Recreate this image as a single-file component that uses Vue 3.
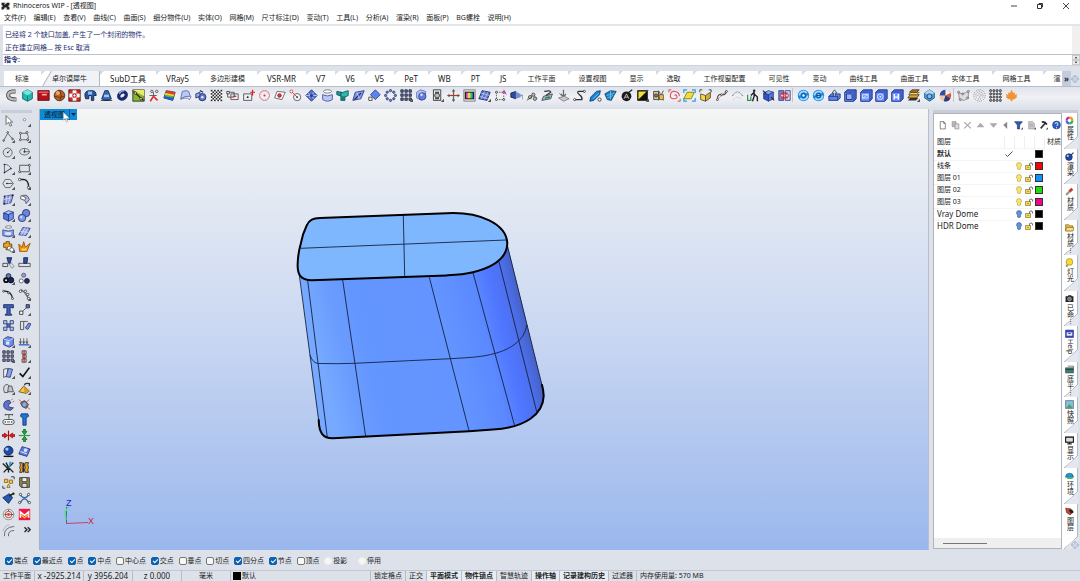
<template>
  <div class="rhino">
    <!-- Title bar -->
    <header class="title-bar">
      <svg class="logo" viewBox="0 0 16 16">
        <path d="M1 2h14v12H1z" fill="#d4d4d4" />
        <path d="M1 2h6l-2 4 4-2 2-2h4v4l-3 2 3 2v4h-5l1-3-4-1-3 4H1v-4l3-2-3-2z" fill="#222" />
      </svg>
      <span class="title">Rhinoceros WIP - [透视图]</span>
      <div class="window-controls">
        <button aria-label="Minimize"><svg viewBox="0 0 8 8"><path d="M1 4h6" stroke="#444" /></svg></button>
        <button aria-label="Restore"><svg viewBox="0 0 8 8"><path d="M1.500 2.500h4v4h-4zM3 2.500v-1h3.500v3.500h-1" stroke="#333" fill="none" /></svg></button>
        <button aria-label="Close"><svg viewBox="0 0 8 8"><path d="M1 1l6 6M7 1l-6 6" stroke="#444" /></svg></button>
      </div>
    </header>

    <nav class="menu-bar">
      <div class="menu-list">
        <a v-for="item in menus" :key="item" href="#">{{ item }}</a>
      </div>
    </nav>

    <!-- Command history and prompt -->
    <section class="command">
      <div class="history">
        <p>已经将 2 个缺口加盖, 产生了一个封闭的物件。</p>
        <p>正在建立网格... 按 Esc 取消</p>
      </div>
      <div class="prompt">
        <label for="command-input">指令:</label>
        <input id="command-input" v-model="command" type="text" />
        <div class="spinner">
          <button aria-label="Up"><svg viewBox="0 0 6 4"><path d="M1 3l2-2 2 2z" fill="#222" /></svg></button>
          <button aria-label="Down"><svg viewBox="0 0 6 4"><path d="M1 1l2 2 2-2z" fill="#222" /></svg></button>
        </div>
      </div>
    </section>

    <!-- Toolbar tabs -->
    <nav class="tabs">
      <div class="tab-list">
        <button
          v-for="tab in tabs"
          :key="tab"
          :class="{ active: tab === activeTab, latin: isLatin(tab) }"
          @click="activeTab = tab"
        >{{ tab }}</button>
      </div>
      <button class="more-tabs" aria-label="More tabs">»</button>
      <button class="tab-options" aria-label="Options"><svg viewBox="0 0 16 16" v-html="gear"></svg></button>
    </nav>

    <div class="toolbar">
      <div v-for="(group, g) in toolGroups" :key="g" class="tool-group" :style="{ flexGrow: group.length }">
        <button v-for="(art, i) in group" :key="i" class="tool" :aria-label="'Tool ' + (i + 1)">
          <svg viewBox="0 0 16 16" v-html="art"></svg>
        </button>
      </div>
    </div>

    <main class="workspace">
      <aside class="side-tools">
        <div class="grip"></div>
        <div class="side-grid">
          <button v-for="(art, i) in sideTools" :key="i" class="tool" :aria-label="'Side tool ' + (i + 1)">
            <svg viewBox="0 0 16 16" v-html="art"></svg>
          </button>
        </div>
      </aside>

      <section class="viewport">
        <svg class="scene" viewBox="40 109 888 441" preserveAspectRatio="xMinYMin meet">
          <defs>
            <linearGradient id="wall" gradientUnits="userSpaceOnUse" x1="300" y1="277" x2="502" y2="228">
              <stop offset="0" stop-color="#76a9ff" />
              <stop offset="0.12" stop-color="#6a9cff" />
              <stop offset="0.22" stop-color="#6496ff" />
              <stop offset="0.62" stop-color="#6494ff" />
              <stop offset="0.8" stop-color="#5b89ff" />
              <stop offset="0.89" stop-color="#4f76ff" />
              <stop offset="0.95" stop-color="#4d70ee" />
              <stop offset="1" stop-color="#4763cb" />
            </linearGradient>
          </defs>
          <path d="M299 270L319 425Q321 438 332 438.300L469 431L493 429.300Q543 425 543.500 397Q543.500 391 542 385L507.500 245L473 262L320 270z" fill="url(#wall)" />
          <path d="M320 218L446.700 213.200C480 211.500 506.500 224 507.300 243.300C507 259 492 267.500 473 272.300C463 274.700 455 275 446.700 275.400L312 280.300C301 280.500 297 275 297.700 263C298 254 299 250 300.700 244C302 236 304 231 306.700 225.500C309.500 219.500 313 218.400 320 218z" fill="#7fb7ff" />
          <g fill="none" stroke="#14233f" stroke-width="0.900">
            <path d="M300.700 248.300L506 240M403.300 215L404.700 276.700" />
            <path d="M299.300 275L319.300 425M307.700 280.700L327.300 437.300M342.700 280L365.700 436.700M429.300 277.300L469 430.700M473 272.700L514.700 426M499 261.700L536.700 411.700M507.500 246L542.700 388" />
            <path d="M310 355C312 361 315 363.300 319 363.500Q337 364 354.700 363.300L450.700 358.700C470 357.500 483 357 495.300 353.300C510 349.500 525 340 526.700 325" />
          </g>
          <g fill="none" stroke="#000" stroke-width="2" stroke-linecap="round">
            <path d="M320 218L446.700 213.200C480 211.500 506.500 224 507.300 243.300C507 259 492 267.500 473 272.300C463 274.700 455 275 446.700 275.400L312 280.300C301 280.500 297 275 297.700 263C298 254 299 250 300.700 244C302 236 304 231 306.700 225.500C309.500 219.500 313 218.400 320 218z" />
            <path d="M318.700 420C319 433 323 438.500 333 438.300L469 431.200L493 429.500C526 427.500 543 414 543.700 396Q543.500 390 542 385" />
          </g>
          <!-- World axes -->
          <path d="M66.500 524V507" stroke="#4763a8" fill="none" />
          <path d="M66 520L65 512L69 506" stroke="#5bdc84" stroke-width="1.500" fill="none" />
          <path d="M66 523.500L88 522.500" stroke="#c4435f" fill="none" />
          <text x="66" y="506" fill="#2222c8" class="axis">Z</text>
          <text x="88" y="524" fill="#d0203a" class="axis">X</text>
        </svg>
        <div class="view-label">
          <button class="view-name">透视图</button>
          <button class="view-menu" aria-label="View menu"><svg viewBox="0 0 6 4"><path d="M0 0h6l-3 4z" fill="#0a2038" /></svg></button>
        </div>
        <svg class="cursor" viewBox="0 0 8 12"><path d="M1 0v9l2-2 1.500 4 1.500-1-1.500-3H8z" fill="#fff" stroke="#777" stroke-width="0.500" /></svg>
      </section>

      <aside class="dock">
        <div class="grip"></div>
        <div class="dock-body">
          <section class="layers">
            <div class="layer-tools">
              <button v-for="(art, i) in layerTools" :key="i" :aria-label="'Layer action ' + (i + 1)">
                <svg viewBox="0 0 16 16" v-html="art"></svg>
              </button>
            </div>
            <table>
              <thead>
                <tr>
                  <th class="name">图层</th><th></th><th></th><th></th><th></th><th>材质</th>
                </tr>
              </thead>
              <tbody>
                <tr v-for="layer in layers" :key="layer.name" :class="{ current: layer.current }">
                  <td class="name" :class="{ latin: isLatin(layer.name) }">{{ layer.name }}</td>
                  <td><svg v-if="layer.current" viewBox="0 0 16 16" v-html="tick"></svg></td>
                  <td><svg v-if="!layer.current" viewBox="0 0 16 16" v-html="layer.on ? bulbOn : bulbOff"></svg></td>
                  <td><svg v-if="!layer.current" viewBox="0 0 16 16" v-html="lock"></svg></td>
                  <td><span class="swatch" :style="{ background: layer.color }"></span></td>
                  <td></td>
                </tr>
              </tbody>
            </table>
            <div class="scrollbar"><span></span></div>
          </section>
          <nav class="panel-tabs">
            <button v-for="panel in panels" :key="panel.id" :class="{ active: panel.id === 'layers' }">
              <svg viewBox="0 0 16 16" v-html="panel.art"></svg>
              <span>{{ panel.label }}</span>
            </button>
          </nav>
          <svg class="dock-gear" viewBox="0 0 16 16" v-html="gear"></svg>
        </div>
      </aside>
    </main>

    <!-- Object snaps -->
    <div class="osnap">
      <div class="snap-list">
        <label v-for="snap in snaps" :key="snap.label" :class="{ round: snap.round }">
          <input v-model="snap.on" type="checkbox" />{{ snap.label }}
        </label>
      </div>
    </div>

    <footer class="status">
      <span class="cell">工作平面</span>
      <span class="cell coord">x -2925.214</span>
      <span class="cell coord">y 3956.204</span>
      <span class="cell coord">z 0.000</span>
      <span class="cell unit">毫米</span>
      <span class="cell layer"><i></i>默认</span>
      <button v-for="mode in modes" :key="mode.label" class="cell" :class="{ on: mode.on }" @click="mode.on = !mode.on">{{ mode.label }}</button>
      <span class="cell memory">内存使用量: 570 MB</span>
    </footer>
  </div>
</template>

<script setup>
import { ref } from 'vue'

const command = ref('')
const activeTab = ref('卓尔谟犀牛')

const menus = [
  '文件(F)', '编辑(E)', '查看(V)', '曲线(C)', '曲面(S)', '细分物件(U)', '实体(O)', '网格(M)',
  '尺寸标注(D)', '变动(T)', '工具(L)', '分析(A)', '渲染(R)', '面板(P)', 'BG螺栓', '说明(H)'
]

const tabs = [
  '标准', '卓尔谟犀牛', 'SubD工具', 'VRay5', '多边形建模', 'VSR-MR', 'V7', 'V6', 'V5', 'PeT', 'WB', 'PT', 'JS',
  '工作平面', '设置视图', '显示', '选取', '工作视窗配置', '可见性', '变动', '曲线工具', '曲面工具', '实体工具',
  '网格工具', '渲'
]

function isLatin(text) {
  return /^\w/.test(text)
}

// Small drawing helpers, all on a 16 x 16 grid
const fill = (d, color, line = 'none') => `<path d="${d}" fill="${color}" stroke="${line}"/>`
const line = (d, color = '#333', width = 1) => `<path d="${d}" fill="none" stroke="${color}" stroke-width="${width}"/>`
const dot = (x, y, r, color, edge = 'none') => `<circle cx="${x}" cy="${y}" r="${r}" fill="${color}" stroke="${edge}"/>`
const dots = (points, r, color, edge) => points.map(([x, y]) => dot(x, y, r, color, edge)).join('')
const more = fill('M16 12v4h-4z', '#555')

const grid = (size, color) =>
  [2, 7, 12].map((y) => [1, 6, 11].map((x) => fill(`M${x} ${y - 1}h${size}v${size}h-${size}z`, color, '#223')).join('')).join('')

const checker = (n, color) => {
  const s = 14 / n
  let out = fill('M1 1h14v14H1z', '#fff')
  for (let y = 0; y < n; y++) {
    for (let x = 0; x < n; x++) {
      if ((x + y) % 2 === 0) out += `<rect x="${1 + x * s}" y="${1 + y * s}" width="${s}" height="${s}" fill="${color}"/>`
    }
  }
  return out
}

const cube = (top, left, right) =>
  fill('M2 5l6-3 6 2-6 3z', top, '#223a80') + fill('M2 5l6 2v8l-6-3z', left, '#223a80') + fill('M8 7l6-3v8l-6 3z', right, '#223a80')

const frame = (inner) =>
  fill('M1 4l3-3h11v11l-3 3H1z', '#4468e0', '#16286c') + fill('M1 4h11v11H1z', '#6e92ff', '#2a469e') + inner

const swirl =
  dot(8, 8, 7, '#1689e0') + line('M3 8a5 5 0 0 1 9-3M13 8a5 5 0 0 1-9 3', '#a5dcff', 2) +
  dot(8, 8, 3, '#0f5cae') + dot(8, 8, 1.5, '#fff')

const gear = dot(8, 8, 6, 'none', '#8fa6c4') + dot(8, 8, 3, 'none', '#8fa6c4') + line('M8 0v3M8 13v3M0 8h3M13 8h3', '#8fa6c4', 2)

const toolGroups = [
  [
    line('M13 3H9Q3 4 4 9q1 4 10 4', '#444', 5) + line('M13 3H9Q3 4 4 9q1 4 10 4', '#bbb', 3),
    fill('M8 1l6 3v8l-6 3-6-3V4z', '#24b7b0', '#0c5e66') + fill('M8 1l6 3-6 4-6-4z', '#79e6db') + line('M8 8v7', '#0c6e70'),
    fill('M1 2h14v12H1z', '#b3121c', '#5c0b10') + fill('M2 3h12v2H2z', '#e85a5a') + fill('M6 6h6v2H6z', '#f4b0a8'),
    dot(8, 8, 6.5, '#b5632a', '#402010') + dot(6, 5, 2.5, '#f0a865') + line('M2 9q6 3 12 0M8 2q4 6 0 12', '#5e2f12'),
    checker(3, '#d8281e') + line('M1 1h14v14H1z', '#3a0d0a') + dots([[8, 8]], 2, '#fff', '#801'),
    fill('M1 8q0-6 6-6h3q5 0 5 6h-3v6h-3V8H6v4H2z', '#2457a4', '#0a1c40') + fill('M5 3h5v4H5z', '#8fbcf2'),
    fill('M6 2h4l4 10q-6 4-12 0z', '#3269b5', '#0d2348') + fill('M5 7h6v3H5z', '#a3c8f0') + line('M1 14h14', '#111'),
    `<ellipse cx="8" cy="8" rx="5" ry="4" fill="none" stroke="#1c2a72" stroke-width="4" transform="rotate(-35 8 8)"/>` + line('M4 6q2-4 6-4', '#9fb6f0', 1.5),
    fill('M1 1h14v14H1z', '#89b52d', '#222') + fill('M1 1h14v8z', '#e9ec6a') + line('M2 3l12 11', '#222', 1.5) + dots([[4, 5], [11, 12]], 1.5, '#fff', '#222'),
    line('M8 9l-4 6M8 9l5 5', '#d33', 2) + line('M3 8h9M8 8V4', '#444') + dots([[6, 3], [12, 3]], 1.5, 'none', '#444'),
    fill('M4 2l11 2-3 10L1 11z', '#31c24d', '#333') + fill('M4 2l11 2-1 3L3 5z', '#e33') + fill('M3 5l11 2-1 2-11-2z', '#f7cf27') + fill('M2 9l11 2-1 3L1 11z', '#2953dd'),
    fill('M4 3q6-2 8 0l2 6q-6-1-12 3z', '#b9c8f6', '#5064a8') + line('M2 13q6-4 11 0l2-4', '#5064a8'),
    dot(9, 10, 4.5, '#5f78d4', '#1c2860') + fill('M1 6l5-2v5l-5 2z', '#96aaee', '#1c2860') + line('M6 2l4 2', '#333', 1.5) + dot(9, 10, 1.5, '#e8eeff'),
    checker(7, '#222'),
    line('M2 4h8v6H2zM6 6h9v7H6z', '#444') + fill('M1 3h3v3H1z', '#fff', '#333') + line('M8 9h5', '#d22') + dot(11, 9, 1, '#d22'),
    line('M2 6h10v8H2z', '#444') + line('M13 1v7M10 4h6', '#e02020', 1.5) + dot(7, 10, 1.2, '#222'),
    dot(8, 8, 6, 'none', '#d56') + dot(8, 8, 1.3, '#d33'),
    fill('M5 3l10 1-4 9-9-2z', '#fff', '#555') + dot(8, 8, 2.2, '#e8344a', '#901020'),
    dot(10, 10, 4.5, 'none', '#555') + line('M3 3l7 7', '#d33') + dot(3, 3, 1.8, '#fff', '#d33') + dot(10, 10, 1, '#222'),
    fill('M8 1l7 7-7 7-7-7z', '#5773d2', '#1c2860') + line('M4 5l7 7M5 11l6-7M1 8h14', '#c5d2ff') + dot(8, 8, 2, '#2b418f'),
    fill('M2 7q6 3 12 0v6q-6 4-12 0z', '#b8c6f8', '#3a4a90') + '<ellipse cx="8" cy="3" rx="5" ry="2" fill="#fff" stroke="#667"/>',
    fill('M1 3l6 1v5l-6-2z', '#1a9c93', '#0b4e50') + fill('M6 5l9-3v6l-4 2v4H6z', '#2dbab0', '#0b4e50') + fill('M6 9h5v5H6z', '#157c78'),
    fill('M4 4l11-2-4 10-10 2z', '#8098ea', '#263880') + line('M3 13l8-8', '#1b2858', 1.5) + line('M6 4l3 8', '#c8d4ff'),
    fill('M9 1l6 6-6 6-6-6z', '#5d83ec', '#203a90') + fill('M1 10h4v4H1z', '#fff', '#333'),
    dots([[8, 2], [12, 4], [14, 8], [12, 12], [8, 14], [4, 12], [2, 8], [4, 4]], 1.4, '#6b80c8', '#2c3870'),
    grid(3, '#5a6cae') + more,
    fill('M2 4l5-3 6 2v8l-5 3-6-3z', '#b5c3f5', '#596cb2') + dot(9, 9, 4.5, '#6480dc', '#2c4494') + dot(8, 7, 1.5, '#dce5ff'),
    fill('M3 1h9v13H3z', '#eee', '#222') + dot(7.5, 8, 3, '#bbb', '#222') + line('M5 4h5M5 12h5', '#222', 1.5) + more,
    line('M8 1v14', '#218a3c', 1.5) + line('M1 8h14', '#d02828', 1.5) + fill('M8 0l2 3H6zM8 16l2-3H6zM0 8l3-2v4zM16 8l-3-2v4z', '#555'),
    fill('M1 1h14v14H1z', '#ddd', '#777') + fill('M3 4h3v8H3z', '#e43fa2') + fill('M6 4h3v8H6z', '#f1da35') + fill('M9 4h2v8H9z', '#24c957') + fill('M11 4h2v8h-2z', '#2e79ec') + line('M3 4h10v8H3z', '#222', 1.5),
    fill('M5 2l10 2-4 10-10-2z', '#5f74c8', '#1b2860') + line('M8 3L4 12M12 4L8 13M4 5l10 3M2 9l10 3', '#b6c4fa') + more,
    `<path d="M3 4h8M3 4v9h9V8" fill="none" stroke="#555" stroke-dasharray="2 1"/>` + dots([[3, 4], [3, 13], [12, 13]], 1.2, '#fff', '#333') + dot(12, 4, 2, '#e0486e') + line('M12 1l3 6', '#7a42c0'),
    fill('M1 5l6-2v9l-6-2z', '#2c4d9f', '#15234e') + fill('M7 3l6 3v4l-6 2z', '#6f91e0') + line('M12 8h4v5', '#999', 2),
    line('M2 12q4-7 12-1', '#777') + dots([[5, 10], [9, 7], [11, 12]], 2, '#bbb', '#444') + line('M1 14l6-4', '#444'),
    fill('M3 9l11-3-2 6-11 2z', '#a3b0e0', '#444') + line('M4 3q8-2 8 1l-6 4', '#333', 1.5) + line('M5 11l6-1', '#2c8b4a', 2),
    line('M8 1v8M5 6l3 4 3-4', '#666', 1.5) + fill('M2 11l7-2 6 3-7 3z', '#ccc', '#777') + line('M3 5l3 4', '#3a9858'),
    line('M14 3H7Q4 4 8 7t3 6H2', '#333', 1.5) + dots([[14, 3], [2, 13]], 1.3, '#fff', '#333'),
    fill('M2 10l7-7 5-1-1 5-7 7-5 1z', '#1681cf', '#0b416f') + line('M5 12l7-7', '#8fd0ff') + dot(13, 13, 2, '#fff', '#222'),
    fill('M1 6l7-4 7 1-3 5-3 6-5-1z', '#1b7fc0', '#0b3f68') + line('M3 8l10-3M4 11l7-3M8 2v11', '#74c4f2'),
    dot(8, 9, 6, '#1b1b1b') + line('M5 12l3-6 3 6M6 10h4', '#ddd') + line('M11 4l4-3', '#222', 1.5),
    fill('M2 2h12v12H2z', '#111', '#111') + fill('M3 13V3h10z', '#f1df35') + line('M14 1l1 1', '#222') + more,
    fill('M2 3h6v10H2z', '#d8cba0', '#333') + line('M8 2l6 12M14 2L8 14', '#333') + fill('M9 7h5v6H9z', '#f0c02e', '#554') + dot(5, 8, 2, '#a66', '#333'),
    line('M8 8q2-2 3 1t-4 3-4-5 6-4 5 6', '#df4a58', 1.3) + line('M1 4V1h3M15 12v3h-3', '#c33'),
    fill('M5 4h9l-4 8H1z', '#f1df3b', '#7d7010') + line('M1 5V1h4M11 1h4v4M15 11v4h-4M5 15H1v-4', '#27a3e0', 1.5),
    fill('M2 6l6 2v7l-6-2z', '#f7d83a', '#444') + fill('M8 8l6-4v7l-6 4z', '#e0ad22', '#444') + line('M1 4V1h3M12 1h3v3', '#333'),
    line('M3 12q0-6 5-5t6-4', '#444', 1.3) + line('M2 14L14 2', '#e67b85') + dots([[3, 13], [8, 7], [14, 3]], 1.2, '#fff', '#333'),
    line('M2 8q6-9 12 0', '#999') + `<path d="M3 13q5-6 10 0" fill="none" stroke="#aaa" stroke-dasharray="1 1"/>` + dots([[2, 8], [14, 8]], 1, '#999'),
    line('M10 3v6l-2 6M10 6l4 4v5M10 4L6 8', '#222', 1.7) + dot(10, 2, 1.5, '#222') + line('M2 7v7h4V9', '#3a8f4d', 1.5),
    cube('#91aaf5', '#3453bc', '#5778e2') + line('M1 2l4 3M15 14l-4-4', '#222', 1.3),
    fill('M1 2h6v12H1z', '#7589d8', '#28387c') + fill('M9 2h6v12H9z', '#cfd7f7', '#28387c') + line('M4 5h8M4 11h8', '#d22', 1.5) + dots([[5, 8], [11, 8]], 2, '#f6c9d0', '#c23')
  ],
  [
    swirl,
    swirl + line('M6 8h4', '#135'),
    fill('M1 9l3-3h11v5l-3 3H1z', '#5f84f0', '#1b2f78') + line('M1 9h11v5', '#1b2f78') + fill('M8 1l3 4H9v4H7V5H5z', '#d5e0ff', '#345'),
    frame(fill('M3 6h7v7H3z', '#98b2ff', '#10205c')),
    frame(line('M3 11V7h7v4zM3 12l7-6', '#e7eeff')),
    frame(dot(6.5, 9.5, 3.5, 'none', '#e7eeff') + dot(6.5, 9.5, 1, '#fff')),
    frame(line('M4 6v7M9 6v7M4 10h5', '#fff', 1.7)),
    fill('M4 11h10l-3 3H1z', '#333') + fill('M4 7h11l-3 4H1z', '#f0a11e', '#333') + fill('M5 4h10l-3 3H2z', '#f4e03a', '#555') + fill('M6 1h9l-3 3H3z', '#d36a28', '#333') + more,
    fill('M8 1l6 4v6l-6 4-6-4V5z', '#4fa2d8', '#1b567d') + fill('M8 1l6 4-6 3-6-3z', '#a7daf5') + dot(8, 9, 3, '#77c3ee', '#226'),
    dot(8, 8, 7, '#d85a32') + fill('M8 8V1a7 7 0 0 0-7 7z', '#2451b0') + fill('M8 8H1a7 7 0 0 0 5 7z', '#e7c8b0') + fill('M8 8V1a7 7 0 0 1 6 4z', '#f3f3f7') + fill('M8 8l6 4a7 7 0 0 1-8 3z', '#223c86')
  ],
  [
    fill('M2 5l5 1 7-3v8l-5 3-6-1z', '#ddd', '#888') + dots([[2, 4], [7, 6], [14, 3], [13, 11], [4, 13]], 1.3, '#bbb', '#777'),
    `<g fill="none" stroke="#777" stroke-width="1.200" stroke-dasharray="1 1.500"><circle cx="8" cy="8" r="7"/><circle cx="8" cy="8" r="4.500"/><circle cx="8" cy="8" r="2"/></g>`,
    dots([2, 6, 10, 14].flatMap((y) => [2, 6, 10, 14].map((x) => [x, y])), 1.3, '#999', '#333'),
    fill('M8 1l2 4 2-1v3l3-1-1 3 1 1-4 3H9v2H7v-2H5l-4-3 1-1-1-3 3 1V4l2 1z', '#ef9438')
  ]
]

const ballPair = dot(10, 5, 4.5, '#6a86dc', '#1f2f6c') + dot(5, 11, 4.5, '#8099e8', '#1f2f6c') + dot(4, 10, 1.3, '#dfe7ff')

const sideTools = [
  fill('M5 2v11l3-3 2 5 2-1-2-4h3z', '#fff', '#555'),
  dot(8, 7, 1.5, '#fff', '#777') + more,
  line('M2 13L7 4l6 7', '#555') + dots([[2, 13], [7, 3], [13, 11]], 1, '#fff', '#333') + more,
  line('M3 12V4h8q3 4 1 8H5', '#555') + dots([[3, 12], [3, 4], [11, 3], [12, 12]], 1.2, '#fff', '#333') + more,
  dot(7, 8, 5.5, 'none', '#555') + line('M7 8l4-4', '#555') + dot(7, 8, 1, '#222') + more,
  '<ellipse cx="8" cy="7" rx="6" ry="4" fill="none" stroke="#555"/>' + line('M8 3v4h6', '#555') + dot(8, 7, 1.2, '#333') + more,
  line('M3 13V3q6 0 8 5zl8-5', '#555') + dots([[3, 3], [3, 13], [11, 8]], 1, '#222') + more,
  line('M2 4h12v8H2z', '#444') + dots([[2, 12], [14, 4]], 1.2, '#fff', '#333') + more,
  fill('M4 3h6l4 5-4 5H4L1 8z', 'none', '#555') + line('M6 8h7', '#444') + dot(6, 8, 1, '#222') + more,
  line('M3 3h4q6 1 6 9', '#222', 1.7) + dots([[2, 3], [13, 13]], 1.5, '#fff', '#333') + more,
  fill('M3 4l11-2-3 10-9 2z', '#8598d8', '#33407c') + line('M6 3L5 13M10 3L8 13M2 8l10-2', '#d7defa') + dots([[3, 4], [13, 3], [3, 13]], 1, '#222') + more,
  fill('M3 5q8-6 11 3l-4 5Q9 8 5 8z', '#b0bdf0', '#444') + fill('M4 3l6 3-2 3-5-2z', '#fff', '#555') + more,
  cube('#b0c0fa', '#5572d6', '#6f8cf0') + more,
  ballPair + more,
  '<ellipse cx="8" cy="2.500" rx="4" ry="1.500" fill="#fff" stroke="#667"/>' + fill('M1 6q7 3 13 0v7q-6 3-13 0z', '#8ea5f2', '#33407c') + fill('M4 9h7v3H4z', '#e8edff') + more,
  fill('M6 3l9 1-5 9-9-1z', '#8da2ea', '#33407c') + line('M9 3L4 12M12 4L7 13M3 8l10 1', '#dbe2ff') + more,
  fill('M2 4h3V2h4v3h3v4H9v3H5V9H2z', '#f1a41d', '#5c3a06') + dots([[9, 10], [12, 12]], 2.5, '#fff', '#555') + more,
  fill('M2 14L1 5l4 4 2-7 2 7 6-5-4 10z', '#f29318', '#984b08') + fill('M4 13l1-3 3 1 2-2 1 4z', '#ffd548'),
  line('M1 9h6v4H1z', '#333') + fill('M6 2h6l-2 7H8z', '#284ea8', '#15234e') + line('M9 10l3-1 3 4-3 2z', '#888'),
  line('M1 9h14v4H1z', '#444') + fill('M7 2h5l-1 7H7z', '#284ea8', '#15234e'),
  dot(8, 5, 3, '#6577cc', '#111') + dot(5, 10, 3.500, '#111') + dot(11, 10, 3.500, '#15235e', '#111') + dot(5, 10, 1.200, '#fff') + more,
  dot(7, 4, 2.5, '#8ba0ee', '#555') + dot(4, 11, 2.5, '#fff', '#555') + dot(11, 11, 3, '#1f2c7c', '#111'),
  line('M2 4q9-1 11 9', '#222', 1.7) + dots([[2, 4], [8, 6], [13, 13]], 1.2, '#fff', '#333'),
  line('M3 3q8 1 9 9', '#333') + line('M4 1l9 12', '#666') + dots([[3, 4], [9, 4], [12, 8], [13, 13]], 1.500, '#fff', '#333') + more,
  fill('M2 2h12v4h-2l-1-1H10v8l2 1v1H4v-1l2-1V5H5L4 6H2z', '#3a61c8', '#14234e'),
  fill('M10 2h4v4h-4z', '#5273dc', '#222') + fill('M2 10h4v4H2z', '#fff', '#222') + line('M6 10l4-4', '#444') + more,
  fill('M2 2h4v4H2zM10 2h4v4h-4zM2 10h4v4H2zM10 10h4v4h-4z', '#b7c4f4', '#26356e') + fill('M6 6h4v4H6z', '#536fd0', '#26356e'),
  line('M3 3v10h4V3zM7 3h5', '#444') + fill('M9 11l4-6 3 1-4 7z', '#7e95e8', '#26356e'),
  fill('M2 5l5-3 7 2v8l-5 3-7-3z', '#6c8cec', '#26356e') + fill('M5 8h4v4H5z', '#dfe6ff') + line('M2 5l7 2 5-3', '#dce4ff') + more,
  line('M1 12h13', '#536fd0', 2) + line('M3 4v7M7 4v7M11 4v7', '#555') + fill('M1 8h4l-2 3zM5 8h4l-2 3zM9 8h4l-2 3z', '#555') + more,
  grid(3, '#8292cc') + more,
  fill('M5 1h5v4H5zM6 6h4v4H6zM5 11h5v4H5z', '#ddd', '#333') + line('M7.500 1v14', '#d22', 1.500) + more,
  fill('M2 4l5-1v9l-5 2z', '#e8ecfa', '#444') + fill('M8 3l5 1-3 10-5-1z', '#8ba1ec', '#26356e') + more,
  line('M2 9l4 4 8-11', '#111', 2) + more,
  fill('M2 9q0-6 5-6l3 3-3 7H3z', '#ddd', '#444') + fill('M8 5h4l2 7H7z', '#bcc2cf', '#444') + more,
  fill('M1 12l6-7 7 6-4 3z', '#f3c54a', '#6c4a08') + fill('M7 5l1 9 6-3z', '#d89a28') + line('M8 4q0-3 6-2v3', '#333', 1.500) + more,
  fill('M9 3Q2 3 2 9t9 6l3-3q-6 0-6-3 0-2 3-3z', '#5d72ca', '#222c60') + line('M11 3l2-2M13 5l2-1', '#d44'),
  fill('M3 6l5-3 5 5-3 5-5-3z', '#c8a941', '#444') + dot(8, 8, 3.500, '#87a5e8', '#334') + line('M1 2l4 3M15 14l-4-3M14 2l-4 3', '#d44'),
  line('M4 2h9M4 1v2M13 1v2M8.500 2v5', '#333') + '<rect x="1" y="8" width="14" height="6" rx="3" fill="#fff" stroke="#333"/>' + dots([[4, 11], [12, 11]], 1, '#333') + line('M6 11h4'),
  fill('M4 1h8l1 3-3 2v9H6V6L3 4z', '#2572d8', '#0b326c'),
  line('M8 2v12', '#c00', 1.500) + fill('M0 7h3V5l4 3-4 3V9H0zM16 7h-3V5L9 8l4 3V9h3z', '#e02020', '#901010'),
  line('M1 8h14', '#28a43a', 1.500) + fill('M7 0v3H5l3 4 3-4H9V0zM7 16v-3H5l3-4 3 4H9v3z', '#24aa3a', '#106a20'),
  dot(8, 7, 5.500, '#1c4ca4', '#061c4c') + dot(6, 5, 2, '#a7c8ff') + line('M2 14h12', '#111', 1.700),
  fill('M5 2l10 3-4 9-10-3z', '#5b7ce2', '#22336e') + fill('M8 4l4 1-2 4-3-1z', '#dfe7ff') + line('M3 8l8 3', '#fff'),
  line('M1 3l6 6-5 5M14 2L8 8l6 6M5 2l3 6v6', '#222', 1.700) + fill('M9 1h3L9 9H8z', '#29a4d8'),
  fill('M2 2h3l1 3-1 3 1 3-1 3H2l1-3-1-3 1-3zM9 2h4l-1 3 1 3-1 3 1 3H9l-1-3 1-3-1-3z', '#efa21f', '#222') + line('M7 2v12', '#222', 1.500),
  fill('M3 4h4v4H3zM9 5h4v4H9z', '#f6cc42', '#886010') + fill('M6 14l2-4 2 4z', '#f3dfa4', '#886010') + line('M11 1h4v3M1 12v3h3', '#222'),
  fill('M2 2h12v12H4l-2-2z', '#9a8b4d', '#333') + fill('M5 2h6v5H5z', '#eee', '#333') + fill('M5 9h6v5H5z', '#ddd', '#333'),
  fill('M1 7l8-5 4 5-5 7z', '#2759ad', '#0b2452') + line('M9 5l5-3', '#222', 2) + dot(14, 2, 1.500, '#222'),
  line('M3 4q5 6 10 0M3 13q5-9 10 0', '#3a6ca8', 1.700) + dots([[3, 3], [13, 3], [2, 13], [14, 13]], 1.400, '#fff', '#333'),
  dot(8, 8, 6.500, '#e5ece8', '#5f8d88') + dot(8, 8, 4, 'none', '#d22') + dot(8, 8, 1.700, '#e33') + line('M3 8h3M10 8h4M8 2v2', '#444'),
  fill('M1 1h14v14H1z', '#eb1746') + line('M3 12V5l5 4 5-4v7', '#fff', 2) + line('M3 8l5 4 5-4', '#ffc72e', 1.500),
  line('M3 15Q2 4 15 3M8 15q-1-7 7-7', '#555') + line('M1 9q3-8 8-8', '#aaa'),
  line('M8 4l3 3-3 3M12 4l3 3-3 3', '#222', 1.700)
]

const layerTools = [
  fill('M4 2h6l3 3v10H4z', '#fff', '#333') + line('M10 2v3h3', '#333'),
  fill('M2 2h7v9H2z', '#bbb', '#888') + fill('M7 6h7v9H7z', '#ddd', '#777'),
  line('M2 3l12 11M14 3L2 14', '#a5a5a5', 2),
  fill('M8 4l7 8H1z', '#aaa'),
  fill('M1 5h14l-7 8z', '#aaa'),
  fill('M11 2v13L4 8z', '#888'),
  fill('M1 2h14L10 8v7H6V8z', '#3156b5', '#152a65') + more,
  fill('M3 2h7l3 3v10H3z', '#ccc', '#888') + line('M5 7h6M5 10h6', '#888') + more,
  line('M3 14L11 5', '#333', 3) + line('M5 3q5-2 9 4', '#222', 3) + more,
  dot(8, 8, 7, '#2959c4', '#173a88') + line('M5 6q1-3 4-2t1 4l-2 2M8 12v2', '#fff', 1.700)
]

const tick = line('M1 9l4 4L15 3', '#333', 1.700)
const bulbOn = fill('M8 1q5 0 5 5 0 2-2 4v4l-3 2-3-2v-4Q3 8 3 6q0-5 5-5z', '#f9e568', '#a78a2a')
const bulbOff = fill('M8 1q5 0 5 5 0 2-2 4v4l-3 2-3-2v-4Q3 8 3 6q0-5 5-5z', '#5f93d8', '#294c84')
const lock = fill('M1 7h10v8H1z', '#f5d94c', '#5c4b12') + line('M9 7V4q0-2 3-2t3 2v3', '#444', 1.500) + dot(6, 11, 1, '#444')

const layers = [
  { name: '默认', current: true, color: '#000000' },
  { name: '线条', on: true, color: '#ff0000' },
  { name: '图层 01', on: true, color: '#0f92ff' },
  { name: '图层 02', on: true, color: '#1ddc10' },
  { name: '图层 03', on: true, color: '#f0058c' },
  { name: 'Vray Dome', on: false, color: '#000000' },
  { name: 'HDR Dome', on: false, color: '#000000' }
]

const ring =
  line('M8 3a5 5 0 0 1 5 5', '#e8a21f', 4) + line('M13 8a5 5 0 0 1-5 5', '#35b54a', 4) +
  line('M8 13a5 5 0 0 1-5-5', '#2f76e0', 4) + line('M3 8a5 5 0 0 1 5-5', '#d9308c', 4)

const panels = [
  { id: 'properties', label: '属性', art: ring },
  { id: 'render', label: '渲染', art: dot(7, 9, 6, '#1f47a0', '#0a1c4c') + dot(5, 7, 2, '#a9c4ff') + line('M11 5l4-4', '#234', 2) },
  { id: 'materials', label: '材质', art: line('M2 14l7-7', '#999', 4) + line('M8 8l5-5', '#c23b2c', 5) },
  { id: 'library', label: '材质⋯', art: fill('M1 3h6l1 2h6v9H1z', '#e8b93a', '#765810') + fill('M3 8h13l-2 6H1z', '#fbe083', '#765810') },
  { id: 'lights', label: '灯光', art: dot(8, 7, 6, '#f7de2d', '#8b760c') + fill('M2 11l4 3-3 2-2-2z', '#888') },
  { id: 'views', label: '已命⋯', art: fill('M1 4h4l1-2h5l1 2h3v10H1z', '#222') + dot(8, 9, 3.5, '#777', '#bbb') },
  { id: 'help', label: 'Help', art: fill('M1 2h14v13H1z', '#3446c4', '#18246c') + fill('M3 6h10v6H3z', '#dfe5ff') + line('M6 8h4', '#223', 1.500) },
  { id: 'ground', label: '底平⋯', art: fill('M1 5h14v9H1z', '#3a7d73', '#1d3633') + line('M1 8h14M5 2h10v3', '#222') },
  { id: 'snapshots', label: '快照', art: fill('M1 1h14v14H1z', '#7fc3de', '#446') + fill('M2 14l6-7 6 7z', '#4da35e') },
  { id: 'display', label: '显示', art: fill('M1 2h14v9H1z', '#ddd', '#222') + line('M1 2h14v9H1zM4 14h8M8 11v3', '#222', 2) },
  { id: 'environment', label: '环境', art: fill('M1 11a7 7 0 0 1 14 0z', '#2298d8', '#146') + fill('M3 11h12l-2 3H4z', '#47b365') },
  { id: 'layers', label: '图层', art: fill('M1 2l9 1 5 6-6 5-6-4z', '#d84628', '#5e1c10') + fill('M6 5h7l2 5-5 1z', '#222') + fill('M1 6l5 4-2 1z', '#2c58c8') }
]

const snaps = ref([
  { label: '端点', on: true },
  { label: '最近点', on: true },
  { label: '点', on: true },
  { label: '中点', on: true },
  { label: '中心点', on: false },
  { label: '交点', on: true },
  { label: '垂点', on: false },
  { label: '切点', on: false },
  { label: '四分点', on: true },
  { label: '节点', on: true },
  { label: '顶点', on: false },
  { label: '投影', on: false, round: true },
  { label: '停用', on: false, round: true }
])

const modes = ref([
  { label: '锁定格点', on: false },
  { label: '正交', on: false },
  { label: '平面模式', on: true },
  { label: '物件锁点', on: true },
  { label: '智慧轨迹', on: false },
  { label: '操作轴', on: true },
  { label: '记录建构历史', on: true },
  { label: '过滤器', on: false }
])
</script>

<style>
body {
  margin: 0;
}
</style>

<style scoped>
.rhino {
  display: flex;
  flex-direction: column;
  height: 100vh;
  overflow: hidden;
  background: #dde1e9;
  color: #222;
  font-family: 'Noto Sans', 'Noto Sans CJK SC', sans-serif;
  font-size: 7px;
  line-height: 10px;
}

.rhino * {
  box-sizing: border-box;
}

button,
input {
  margin: 0;
  padding: 0;
  border: 0;
  background: none;
  color: inherit;
  font: inherit;
}

svg {
  display: block;
}

/* Title and menu */
.title-bar {
  display: flex;
  align-items: center;
  height: 12px;
  flex: none;
  background: #fff;
}

.logo {
  width: 9px;
  height: 10px;
  margin: 0 3px 0 1px;
}

.window-controls {
  display: flex;
  gap: 18px;
  margin-left: auto;
  padding-right: 10px;
}

.window-controls svg {
  width: 8px;
  height: 8px;
}

.menu-bar {
  height: 14px;
  flex: none;
  padding: 1px 4px 0;
  border-bottom: 2px solid #e3e5e9;
  background: #fff;
}

.menu-list {
  display: flex;
  justify-content: space-between;
  max-width: 507px;
}

.menu-bar a {
  color: #222;
  text-decoration: none;
}

/* Command area */
.command {
  flex: none;
  padding-left: 3px;
  border-bottom: 1px solid #cfd3da;
}

.history {
  padding: 2px 2px 0;
  border-right: 8px solid #f0f0f0;
  background: #fff;
  color: #252d70;
}

.history p {
  margin: 0;
  line-height: 13px;
}

.prompt {
  display: flex;
  align-items: center;
  height: 11px;
  padding-left: 1px;
  border-top: 1px solid #bfc1c6;
  background: #fff;
  color: #252d70;
  font-weight: bold;
}

.prompt input {
  flex: 1;
  min-width: 0;
  height: 10px;
  outline: none;
}

.spinner {
  display: flex;
  flex-direction: column;
  width: 8px;
}

.spinner button {
  height: 5px;
  border: 1px solid #ccc;
  background: #eee;
}

.spinner svg {
  width: 6px;
  height: 3px;
}

/* Toolbar tabs */
.tabs {
  display: flex;
  flex: none;
  height: 21px;
  padding: 5px 0 0 4px;
  border-bottom: 1px solid #b9bdc8;
}

.tab-list {
  display: flex;
  flex: 1;
  min-width: 0;
  overflow: hidden;
  background: #fff;
}

.tab-list button {
  position: relative;
  flex: none;
  padding: 0 12px 0 11px;
  white-space: nowrap;
}

.tab-list button.latin {
  padding: 0 10px;
  font-size: 8px;
}

.tab-list button::before {
  content: '';
  position: absolute;
  top: 0;
  left: 0;
  border-top: 4px solid #d6dae4;
  border-right: 4px solid transparent;
}

.tab-list button:first-child::before {
  display: none;
}

.tab-list button.active {
  background: linear-gradient(120deg, #fff 8px, #b4b8c2 9px, #f0f2f6 10px);
  border-right: 1px solid #b4b8c2;
}

.more-tabs {
  width: 9px;
  background: #c5cbdf;
  font-size: 8px;
  font-weight: bold;
}

.tab-options {
  width: 9px;
}

.tab-options svg {
  width: 8px;
  height: 8px;
}

/* Icon toolbar */
.toolbar {
  display: flex;
  flex: none;
  height: 20px;
  padding: 1px 61px 5px 4px;
  background: linear-gradient(#dfe3ec, #f0f1f5 50%, #dfe3eb);
}

.tool-group {
  display: flex;
  flex: 1 1 0;
}

.tool-group + .tool-group {
  padding-left: 2px;
  border-left: 1px solid #bfc4cf;
}

.tool {
  display: flex;
  flex: 1 1 0;
  align-items: center;
  justify-content: center;
  min-width: 0;
}

.tool svg {
  width: 13px;
  height: 13px;
}

/* Main area */
.workspace {
  display: flex;
  flex: 1;
  min-height: 0;
  padding-top: 2px;
}

.side-tools {
  display: flex;
  flex-direction: column;
  width: 39px;
  flex: none;
  padding: 1px 7px 12px 1px;
}

.grip {
  height: 3px;
  flex: none;
  background: #c8ccd6;
}

.side-grid {
  display: grid;
  grid-template-columns: 1fr 1fr;
  grid-auto-rows: 1fr;
  flex: 1;
  min-height: 0;
}

.viewport {
  position: relative;
  flex: 1;
  min-width: 0;
  overflow: hidden;
  border-left: 1px solid #aab0bc;
  background: linear-gradient(#f4f5f4, #ccd9f2 48%, #9ab7ed);
}

.scene {
  width: 100%;
}

.axis {
  font-family: 'Liberation Sans', sans-serif;
  font-size: 9px;
}

.view-label {
  position: absolute;
  top: 0;
  left: 0;
  display: flex;
  height: 11px;
  background: #0f8ad6;
}

.view-name {
  padding: 0 4px;
  color: #06182c;
}

.view-menu {
  width: 8px;
  border-left: 1px solid #0a5d96;
}

.view-menu svg {
  width: 5px;
  height: 3px;
  margin: auto;
}

.cursor {
  position: absolute;
  top: 3px;
  left: 22px;
  width: 8px;
  height: 11px;
}

/* Layer dock */
.dock {
  display: flex;
  flex-direction: column;
  width: 152px;
  flex: none;
  padding: 1px 2px 1px 4px;
  border-left: 1px solid #b9bec9;
}

.dock-body {
  position: relative;
  display: flex;
  flex: 1;
  min-height: 0;
}

.layers {
  display: flex;
  flex-direction: column;
  flex: 1;
  min-width: 0;
  border: 1px solid #aeb3be;
  background: #fff;
}

.layer-tools {
  display: flex;
  justify-content: space-between;
  padding: 6px 0 6px 4px;
}

.layer-tools svg {
  width: 9px;
  height: 10px;
}

table {
  width: 100%;
  border-collapse: collapse;
  table-layout: fixed;
}

th,
td {
  width: 10px;
  height: 12px;
  padding: 0;
  border-right: 1px solid #f0f0f0;
  font-weight: normal;
  text-align: left;
  white-space: nowrap;
}

th:last-child,
td:last-child {
  width: 17px;
  border: 0;
  text-align: right;
}

td {
  border-color: transparent;
  border-top: 1px solid #f4f4f4;
}

.name {
  width: auto;
  padding-left: 3px;
}

.name.latin {
  font-size: 8px;
}

.current .name {
  font-weight: bold;
}

td svg {
  width: 8px;
  height: 8px;
}

.swatch {
  display: block;
  width: 8px;
  height: 8px;
  border: 1px solid #333;
}

.scrollbar {
  margin-top: auto;
  padding: 5px 9px 4px;
  background: #efefef;
}

.scrollbar span {
  display: block;
  width: 40%;
  height: 1px;
  background: #777;
}

.panel-tabs {
  display: flex;
  flex-direction: column;
  width: 16px;
  flex: none;
}

.panel-tabs button {
  position: relative;
  display: flex;
  flex: 1 1 0;
  flex-direction: column;
  align-items: center;
  gap: 1px;
  min-height: 0;
  padding-top: 3px;
  border-right: 1px solid #b4b9c4;
  background: #fff;
}

.panel-tabs button::after {
  content: '';
  position: absolute;
  right: -1px;
  bottom: 0;
  width: 14px;
  height: 13px;
  background: linear-gradient(to bottom right, transparent 48%, #aeb3be 50%, #e4e7ed 54%);
}

.panel-tabs button.active {
  flex-grow: 1.3;
}

.panel-tabs svg {
  width: 9px;
  height: 9px;
  flex: none;
}

.panel-tabs span {
  position: relative;
  z-index: 1;
  writing-mode: vertical-rl;
  line-height: 10px;
}

.dock-gear {
  position: absolute;
  right: -1px;
  bottom: 0;
  width: 8px;
  height: 8px;
}

/* Object snap bar */
.osnap {
  height: 20px;
  flex: none;
  padding: 6px 5px 0;
}

.snap-list {
  display: flex;
  justify-content: space-between;
  max-width: 376px;
}

.osnap label {
  display: flex;
  align-items: center;
  gap: 1px;
}

.osnap input {
  position: relative;
  width: 8px;
  height: 8px;
  border: 1px solid #777;
  border-radius: 2px;
  background: #f7f7f7;
  appearance: none;
}

.osnap input:checked {
  border-color: #0c62b0;
  background: #0c62b0;
}

.osnap input:checked::after {
  content: '';
  position: absolute;
  top: 0;
  left: 2px;
  width: 2px;
  height: 4px;
  border: solid #fff;
  border-width: 0 1px 1px 0;
  transform: rotate(45deg);
}

.osnap .round input {
  border-color: #eee;
  border-radius: 50%;
}

.osnap .round:last-child {
  margin-left: 6px;
}

/* Status bar */
.status {
  display: flex;
  flex: none;
  height: 11px;
  border-top: 1px solid #c3c7d0;
}

.cell {
  padding: 0 3px;
  border-right: 1px solid #b8bcc6;
  line-height: 10px;
  white-space: nowrap;
}

.coord,
.unit {
  width: 49px;
  padding: 0;
  text-align: center;
}

.coord {
  font-size: 8px;
}

.layer {
  display: flex;
  align-items: center;
  gap: 1px;
  width: 140px;
  padding-left: 2px;
}

.layer i {
  width: 8px;
  height: 8px;
  background: #000;
}

.cell.on {
  background: #e6edf3;
  font-weight: bold;
}

.memory {
  border: 0;
}
</style>
